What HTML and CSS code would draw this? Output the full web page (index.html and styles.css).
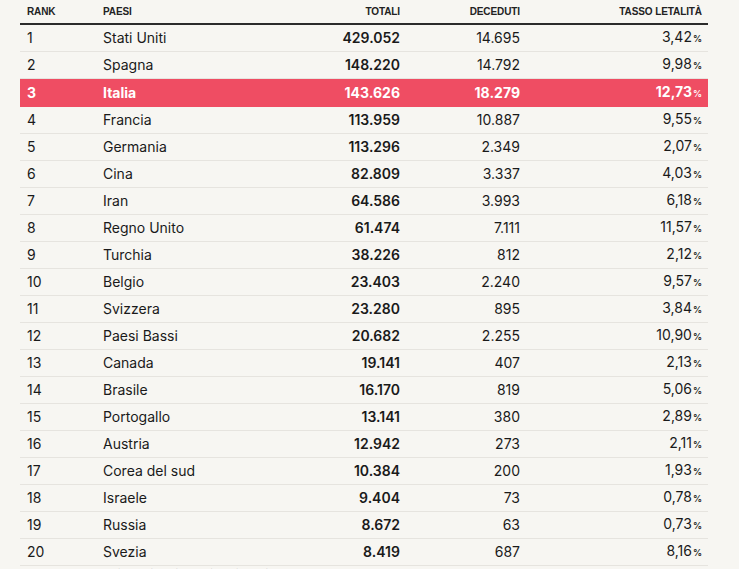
FILE: index.html
```html
<!DOCTYPE html>
<html lang="it">
<head>
<meta charset="utf-8">
<title>Classifica contagi</title>
<link rel="stylesheet" href="styles.css">
</head>
<body>
<div class="wrap">
<table class="tbl">
<colgroup>
<col class="c-rank"><col class="c-paese"><col class="c-tot"><col class="c-dec"><col class="c-tasso">
</colgroup>
<thead>
<tr><th class="l rank">RANK</th><th class="l">PAESI</th><th class="r">TOTALI</th><th class="r">DECEDUTI</th><th class="r tasso">TASSO LETALITÀ</th></tr>
</thead>
<tbody>
<tr><td class="rank">1</td><td>Stati Uniti</td><td class="r b">429.052</td><td class="r">14.695</td><td class="r tasso">3,42<span class="pc">%</span></td></tr>
<tr><td class="rank">2</td><td>Spagna</td><td class="r b">148.220</td><td class="r">14.792</td><td class="r tasso">9,98<span class="pc">%</span></td></tr>
<tr class="hl"><td class="rank">3</td><td>Italia</td><td class="r b">143.626</td><td class="r">18.279</td><td class="r tasso">12,73<span class="pc">%</span></td></tr>
<tr><td class="rank">4</td><td>Francia</td><td class="r b">113.959</td><td class="r">10.887</td><td class="r tasso">9,55<span class="pc">%</span></td></tr>
<tr><td class="rank">5</td><td>Germania</td><td class="r b">113.296</td><td class="r">2.349</td><td class="r tasso">2,07<span class="pc">%</span></td></tr>
<tr><td class="rank">6</td><td>Cina</td><td class="r b">82.809</td><td class="r">3.337</td><td class="r tasso">4,03<span class="pc">%</span></td></tr>
<tr><td class="rank">7</td><td>Iran</td><td class="r b">64.586</td><td class="r">3.993</td><td class="r tasso">6,18<span class="pc">%</span></td></tr>
<tr><td class="rank">8</td><td>Regno Unito</td><td class="r b">61.474</td><td class="r">7.111</td><td class="r tasso">11,57<span class="pc">%</span></td></tr>
<tr><td class="rank">9</td><td>Turchia</td><td class="r b">38.226</td><td class="r">812</td><td class="r tasso">2,12<span class="pc">%</span></td></tr>
<tr><td class="rank">10</td><td>Belgio</td><td class="r b">23.403</td><td class="r">2.240</td><td class="r tasso">9,57<span class="pc">%</span></td></tr>
<tr><td class="rank">11</td><td>Svizzera</td><td class="r b">23.280</td><td class="r">895</td><td class="r tasso">3,84<span class="pc">%</span></td></tr>
<tr><td class="rank">12</td><td>Paesi Bassi</td><td class="r b">20.682</td><td class="r">2.255</td><td class="r tasso">10,90<span class="pc">%</span></td></tr>
<tr><td class="rank">13</td><td>Canada</td><td class="r b">19.141</td><td class="r">407</td><td class="r tasso">2,13<span class="pc">%</span></td></tr>
<tr><td class="rank">14</td><td>Brasile</td><td class="r b">16.170</td><td class="r">819</td><td class="r tasso">5,06<span class="pc">%</span></td></tr>
<tr><td class="rank">15</td><td>Portogallo</td><td class="r b">13.141</td><td class="r">380</td><td class="r tasso">2,89<span class="pc">%</span></td></tr>
<tr><td class="rank">16</td><td>Austria</td><td class="r b">12.942</td><td class="r">273</td><td class="r tasso">2,11<span class="pc">%</span></td></tr>
<tr><td class="rank">17</td><td>Corea del sud</td><td class="r b">10.384</td><td class="r">200</td><td class="r tasso">1,93<span class="pc">%</span></td></tr>
<tr><td class="rank">18</td><td>Israele</td><td class="r b">9.404</td><td class="r">73</td><td class="r tasso">0,78<span class="pc">%</span></td></tr>
<tr><td class="rank">19</td><td>Russia</td><td class="r b">8.672</td><td class="r">63</td><td class="r tasso">0,73<span class="pc">%</span></td></tr>
<tr><td class="rank">20</td><td>Svezia</td><td class="r b">8.419</td><td class="r">687</td><td class="r tasso">8,16<span class="pc">%</span></td></tr>
</tbody>
</table>
<p class="note">Fonte: Johns Hopkins University, dati aggiornati</p>
</div>
</body>
</html>
```
FILE: styles.css
```css
html, body {
  margin: 0;
  padding: 0;
  background: #f7f6f2;
}
body {
  font-family: "Inter", "Liberation Sans", sans-serif;
  color: #1a1a1a;
}
.wrap {
  padding-left: 20px;
  width: 688px;
}
.tbl {
  width: 688px;
  border-collapse: collapse;
  table-layout: fixed;
}
.c-rank { width: 83px; }
.c-paese { width: 197px; }
.c-tot { width: 100px; }
.c-dec { width: 120px; }
.c-tasso { width: 188px; }
.tbl th {
  font-family: "Liberation Sans", Arial, sans-serif;
  font-size: 10px;
  line-height: 12px;
  font-weight: bold;
  color: #222;
  height: 23px;
  padding: 0;
  vertical-align: middle;
  letter-spacing: -0.1px;
  border-bottom: 2px solid #2b2b2b;
}
.tbl td {
  font-size: 14px;
  line-height: 16px;
  height: 26px;
  padding: 0;
  vertical-align: middle;
  border-bottom: 1px solid #e6e4df;
  white-space: nowrap;
}
.l { text-align: left; }
.r { text-align: right; }
.b { font-weight: 600; }
.rank { padding-left: 7px !important; }
.tasso { padding-right: 6px !important; }
.pc {
  font-size: 9px;
  font-weight: 600;
  margin-left: 1px;
}
.hl td {
  height: 27px;
  background: #ef4d63;
  color: #fff;
  font-weight: bold;
  border-bottom-color: #ef4d63;
}
.note {
  margin: 1px 0 0 0;
  font-size: 11px;
  line-height: 14px;
  color: #888;
}
```
